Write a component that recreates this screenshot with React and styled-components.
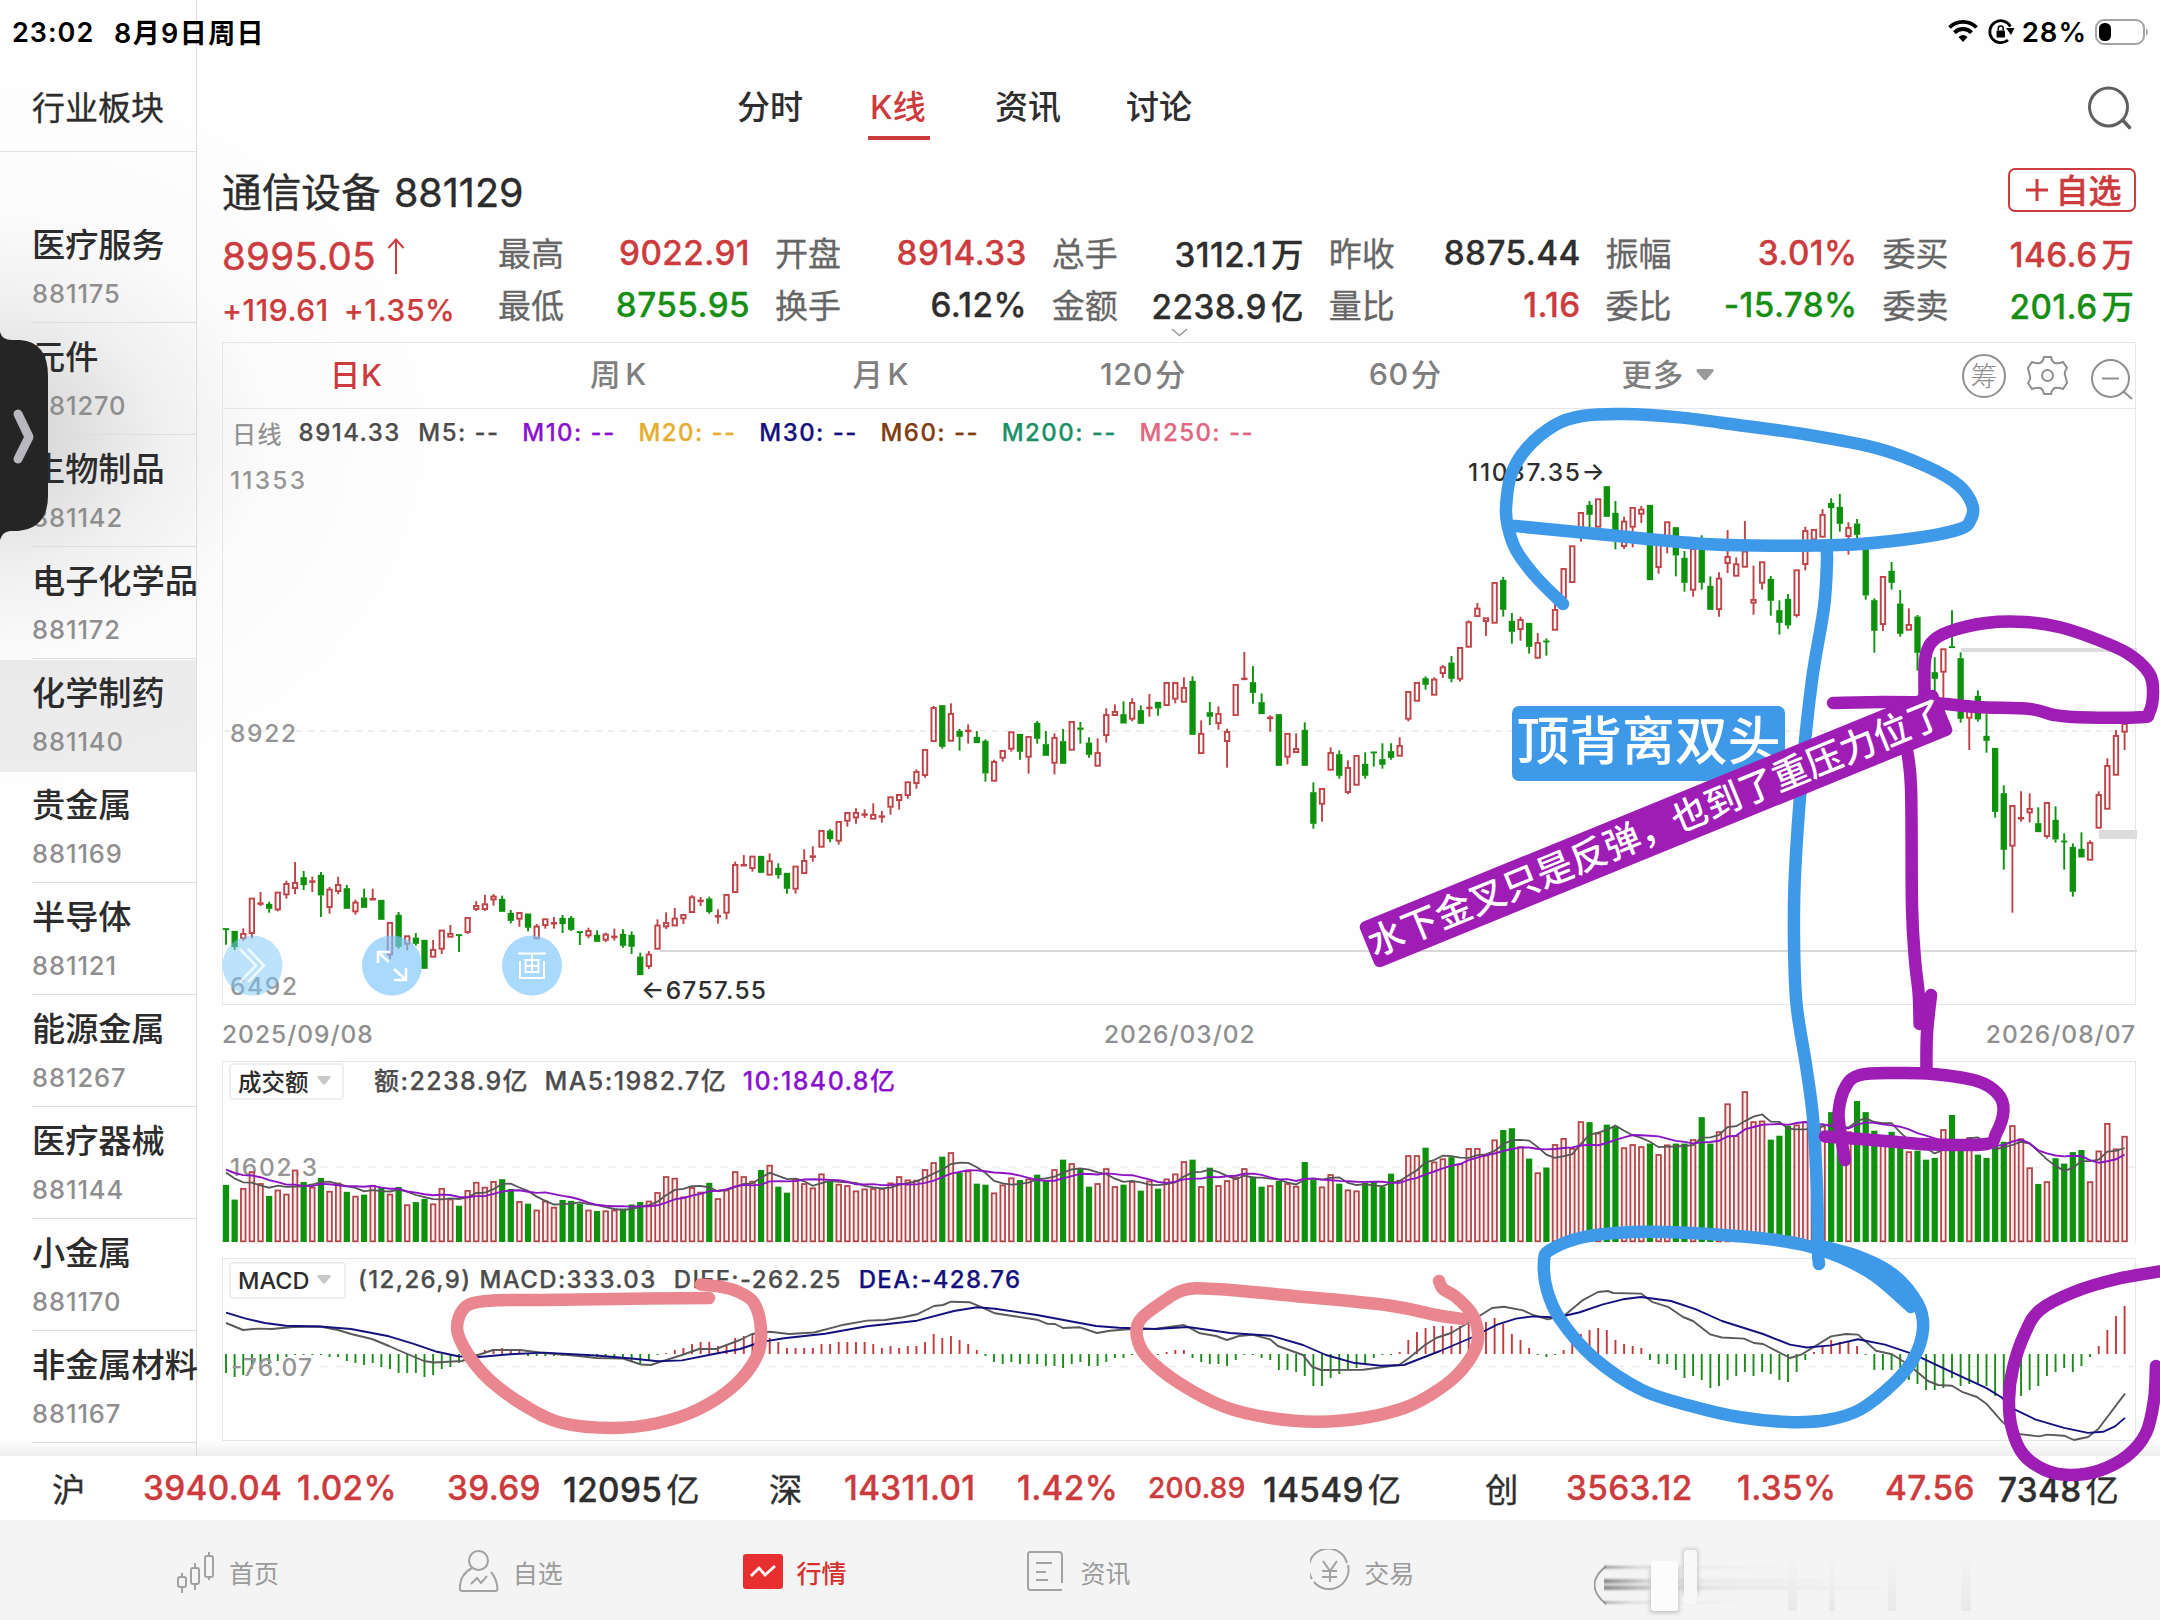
import React from 'react';
import styled, { createGlobalStyle } from 'styled-components';

const GlobalStyle = createGlobalStyle`
  * {
    box-sizing: border-box;
  }

  body {
    margin: 0;
    background: #fefefe;
    color: #2c2c2c;
    font-family: Inter, 'Noto Sans CJK SC', sans-serif;
  }
`;

const RED = '#cc3b3d';
const GREEN = '#178f15';
const DARK = '#2e2e2e';

/* ---------- chart data ---------- */

// every candle: up/down, high, body top, body bottom, low (thirds of a pixel below `top`)
const candleBlocks = [
  {
    top: 540,
    rows: `g 1165 1165 1168 1214,g 1173 1173 1221 1230,r 1165 1180 1196 1202,r 1074 1074 1181 1195,r 1056 1088 1092 1098,
    g 1085 1092 1106 1118,r 1056 1056 1110 1114,r 1022 1030 1065 1076,r 966 1027 1046 1063,g 993 1012 1035 1050,
    r 1010 1022 1025 1056,g 996 1005 1066 1131,r 1041 1047 1103 1121,r 1010 1033 1055 1063,g 1035 1045 1106 1106,
    r 1079 1086 1116 1124,g 1046 1073 1103 1106,r 1046 1075 1079 1082,g 1080 1080 1139 1142,r 1147 1147 1245 1258,
    g 1116 1125 1220 1226,r 1185 1187 1213 1231,g 1179 1193 1211 1217,g 1200 1200 1286 1286,r 1200 1228 1252 1253,
    r 1170 1170 1228 1242,r 1155 1180 1192 1193,g 1183 1183 1187 1236,r 1132 1132 1178 1182,r 1083 1096 1109 1113,
    r 1064 1091 1109 1113,r 1062 1068 1080 1097,g 1067 1077 1115 1116,g 1110 1119 1142 1150,r 1117 1117 1138 1160,
    g 1121 1121 1163 1174,r 1152 1158 1197 1200,r 1134 1136 1157 1166,r 1131 1147 1150 1166,g 1125 1134 1152 1179,
    g 1128 1134 1169 1173,g 1174 1174 1178 1215,r 1163 1171 1188 1195,g 1171 1185 1205 1206,r 1178 1182 1201 1206,
    r 1166 1188 1190 1202,g 1168 1182 1217 1223,g 1174 1185 1220 1242,g 1238 1250 1305 1308,r 1233 1242 1280 1287,
    r 1138 1155 1228 1230,r 1117 1147 1161 1167,r 1104 1134 1158 1160,r 1121 1123 1137 1152,r 1066 1070 1118 1121,
    r 1071 1080 1083 1098,g 1070 1076 1116 1121,r 1108 1126 1129 1151`,
  },
  {
    top: 600,
    rows: `r 883 883 940 958,r 785 793 878 880,r 765 793 797 797,r 768 768 806 815,g 768 768 818 818,
    r 760 782 826 828,g 790 804 825 836,g 819 819 866 881,r 795 798 868 881,r 748 781 821 822,
    r 739 767 770 785,r 691 691 742 743,g 687 692 717 727,r 664 664 724 734,r 637 637 664 680,
    r 625 637 654 671,r 628 641 644 654,r 610 643 658 660,r 633 647 650 668,r 590 590 622 644,
    r 583 583 602 629,r 545 545 587 596,r 508 514 551 566,r 448 448 527 533,r 318 322 425 428,
    g 316 316 440 446,r 310 340 424 425,g 387 393 410 452,r 373 390 393 431,g 393 411 429 431,
    g 418 423 520 545,r 479 484 544 545,r 451 451 475 485,r 395 395 448 455,g 399 402 455 479,
    r 409 409 472 521,g 363 369 416 431,g 393 433 467 470,r 400 412 490 523,g 387 424 491 491,
    r 364 364 451 452,g 366 383 389 431,g 412 428 464 473,r 415 457 499 500,r 325 343 407 428,
    r 313 334 347 350,g 304 343 370 372,r 295 307 358 364,g 316 331 371 372,r 282 321 324 350,
    g 306 306 325 347,r 244 247 317 320,r 247 247 298 310,r 232 262 307 308,g 229 243 404 404,
    r 361 400 461 462,g 306 337 350 375,r 319 340 371 389,r 386 394 425 503,r 253 253 347 348,
    r 156 234 238 240,g 198 247 278 311,g 280 307 342 344,r 346 351 354 395,g 343 343 497 497,
    r 400 400 472 493,r 400 445 458 461,g 367 390 497 497,g 547 577 671 686,r 565 565 613 665,
    r 442 457 511 514,g 451 463 527 536,r 481 502 578 583,r 466 466 556 557,g 457 492 527 536,
    g 455 455 458 500,g 430 478 494 506,g 430 454 473 479,r 412 436 469 470,r 274 274 358 364,
    r 247 247 304 305,g 229 235 254 269,r 232 237 286 287`,
  },
  {
    top: 440,
    rows: `r 675 680 701 714,g 648 668 716 727,r 622 622 718 725,r 541 545 622 623,r 489 504 530 532,
    r 532 533 545 588,r 427 427 550 551,g 411 420 509 530,g 519 543 575 611,r 530 538 569 602,
    g 549 549 620 641,r 579 607 655 656,g 595 602 604 647,r 490 508 571 573,r 385 385 475 500,
    r 317 317 428 429,r 217 217 265 305,g 183 195 224 265,r 176 176 262 263,g 139 139 230 230,
    g 183 219 270 328,r 230 243 320 327,r 202 202 262 322,r 198 207 223 249,g 192 195 420 423,
    r 300 310 383 401,r 245 245 305 340,g 262 262 346 409,g 333 354 428 455,r 320 325 451 470,
    g 286 325 428 449,g 409 438 509 512,r 397 414 509 530,r 270 349 371 399,r 352 371 409 410,
    r 243 333 382 383,r 377 478 490 524,r 365 365 430 449,g 408 417 482 527,g 481 511 548 584,
    g 462 477 556 566,r 389 389 527 532,r 260 271 374 391,r 265 268 300 310,r 207 223 292 293,
    g 175 189 204 310,g 162 201 251 275,r 247 262 290 344,g 237 251 284 305,g 320 328 466 479,
    g 475 481 572 638,r 409 409 554 573,g 366 393 428 449,g 450 491 581 590,r 505 553 571 573,
    g 525 530 638 692,g 640 660 700 700,g 652 697 716 757,r 626 626 697 790,g 511 619 623 624,
    g 637 655 836 848,r 781 785 835 930,g 751 768 838 845,g 820 888 902 938,g 921 924 1115 1133,
    g 1036 1060 1229 1289,r 1096 1096 1219 1418,r 1054 1132 1135 1145,r 1060 1105 1119 1147,g 1102 1150 1176 1178,
    r 1087 1087 1190 1196,g 1099 1140 1198 1208,g 1180 1202 1205 1289,g 1210 1221 1355 1370,g 1177 1227 1252 1253,
    r 1201 1207 1261 1262,r 1054 1063 1165 1168,r 955 976 1108 1109,r 870 886 1006 1007,r 846 850 877 930`,
  },
];

const candles = candleBlocks.flatMap(({ top, rows }) =>
  rows.split(',').map((row) => {
    const [dir, ...v] = row.trim().split(' ');
    const [high, open, close, low] = v.map((n) => top + Number(n) / 3);
    return { up: dir === 'r', high, open, close, low };
  })
);

const volumeBlocks = [
  {
    top: 840,
    scale: 2.45,
    values: [
      845, 881, 853, 812, 841, 872, 857, 867, 808, 838, 850, 828, 860, 840, 862, 872, 869, 846, 852, 867, 850, 893,
      887, 879, 891, 853, 879, 896, 858, 838, 850, 836, 831, 855, 885, 891, 906, 884, 899, 882, 884, 891, 906, 909,
      908, 906, 903, 893, 887, 884, 863, 824, 828, 874, 851, 862, 840, 878, 857, 812,
    ],
  },
  {
    top: 1030,
    scale: 3,
    values: [
      439, 453, 420, 405, 470, 488, 446, 460, 473, 431, 452, 462, 466, 482, 476, 475, 475, 458, 439, 449, 450, 418,
      397, 380, 367, 428, 422, 461, 464, 488, 464, 443, 450, 446, 434, 452, 418, 389, 400, 417, 470, 460, 415, 469,
      464, 454, 482, 452, 476, 446, 431, 394, 389, 469, 413, 466, 451, 440, 415, 440, 470, 466, 453, 460, 468, 396,
      450, 470, 433, 461, 479, 482, 458, 454, 470, 431, 450, 376, 376, 353, 395,
    ],
  },
  {
    top: 940,
    scale: 2.8,
    values: [
      612, 608, 626, 583, 583, 602, 559, 532, 527, 578, 612, 651, 637, 572, 555, 583, 508, 510, 540, 517, 523, 581,
      572, 578, 570, 600, 573, 570, 570, 558, 496, 570, 536, 458, 547, 424, 508, 506, 559, 548, 520, 517, 508, 545,
      520, 482, 545, 536, 451, 482, 534, 560, 537, 580, 592, 590, 615, 610, 530, 490, 590, 553, 601, 610, 575, 565,
      519, 556, 637, 683, 676, 611, 626, 594, 588, 676, 590, 513, 584, 549,
    ],
  },
];

const volumeTops = volumeBlocks.flatMap(({ top, scale, values }) => values.map((v) => top + v / scale));

const macdBars = [
  -19, -23, -21, -15, -10, -10, -7, -3, -1, -1, -1, -1, -3, -3, -7, -9, -11, -9, -13, -15, -19, -19, -19, -23, -21,
  -15, -13, -9, -5, -2, 4, 5, 6, 3, 3, -2, -2, -2, -2, -2, -2, -2, -2, -3, -3, -3, -5, -7, -11, -6, -1, 1, 4, 6, 10,
  12, 12, 8, 10, 16, 18, 20, 20, 16, 12, 6, 6, 6, 6, 10, 10, 12, 12, 12, 12, 10, 6, 8, 6, 8, 8, 12, 20, 16, 18, 14,
  10, 4, -2, -8, -10, -8, -10, -10, -10, -12, -12, -14, -10, -8, -12, -12, -8, -4, -4, -1, -1, 0, -1, 2, 4, 4, -4,
  -8, -10, -10, -12, -6, -1, -1, -4, -6, -16, -16, -18, -22, -32, -32, -24, -20, -16, -14, -10, -4, -1, -1, 2, 14,
  22, 26, 28, 28, 28, 28, 30, 30, 32, 36, 30, 20, 14, 6, -1, -3, -1, 4, 14, 20, 24, 26, 24, 14, 10, 8, 6, -6, -10,
  -10, -16, -24, -22, -26, -34, -32, -26, -22, -18, -22, -18, -20, -26, -28, -18, -6, 2, 8, 14, 12, 12, 8, -1, -16,
  -16, -16, -22, -26, -30, -36, -36, -34, -24, -32, -30, -30, -32, -42, -44, -44, -42, -36, -32, -22, -18, -14, -18,
  -12, -3, 8, 24, 38, 48,
];

const diffLine = `226,1323 243,1330 258,1328.6 272,1329 293,1327 320,1326.5 338,1330 351,1334 372,1339 389,1346 398,1350
424,1361 434,1362.5 462,1361 475,1356 493,1350 520,1350 544,1353 579,1356 596,1358 623,1358.5 641,1364.5 651,1365
661,1361.6 682,1355 699,1349 716,1349 740,1340 752,1334 770,1331.7 789,1334 814,1332.5 844,1324.7 867,1320.6 885,1320
903,1317.3 917,1314.3 934,1306 943,1305 951,1301.7 970,1302.3 982,1307.3 995,1313.3 1011,1315.7 1037,1319.7
1047,1323.7 1055,1324 1063,1328 1080,1327.3 1097,1333 1110,1330.7 1128,1329.3 1156,1328.7 1184,1325 1200,1333.3
1216,1336 1227,1340 1239,1336 1252,1334.7 1270,1339.3 1278,1346 1303,1355 1312,1366.7 1321,1370 1363,1369.7
1399,1365 1409,1358 1425,1345 1436,1338 1451,1333 1473,1320 1492,1308 1504,1306.8 1523,1310.4 1533,1315 1548,1319.3
1565,1315 1582,1300.7 1598,1292 1608,1291 1613,1293 1641,1293.6 1652,1301.8 1668,1306.8 1683,1317 1693,1321
1710,1334.3 1722,1337.5 1744,1338.6 1754,1343 1763,1344 1790,1358 1802,1354.3 1831,1336.4 1846,1334 1858,1334.6
1876,1350.7 1892,1354.3 1909,1365 1928,1381 1938,1385 1952,1385.7 1962,1391.8 1977,1397 1987,1404.3 2001,1420.4
2015,1433.6 2039,1436.4 2047,1434.6 2064,1435.7 2074,1440 2088,1437 2098,1429.3 2125,1393.6`;

const deaLine = `226,1312.7 245,1318.4 265,1323 286,1325.7 320,1326.5 351,1329 389,1336.3 413,1343.7 437,1351.8
458,1356.3 479,1357 510,1354.3 544,1352.6 596,1355.5 634,1358.8 658,1361.2 682,1360.4 710,1354.7 740,1349 761,1342
784,1338.3 825,1333.7 867,1326.3 917,1320.7 954,1311 977,1307.3 995,1308.7 1037,1315 1069,1321 1096,1326
1119,1327.7 1156,1329 1188,1327 1230,1333 1271,1335.7 1303,1345 1326,1355 1353,1362.7 1381,1365.7 1404,1365
1440,1351 1473,1337 1497,1324.6 1516,1318.6 1533,1316.4 1557,1317.5 1579,1312.5 1603,1304.3 1623,1299.3 1641,1297
1671,1301 1696,1309.3 1722,1321 1763,1334 1790,1344.6 1807,1347.5 1831,1345.4 1858,1339.3 1885,1344.6 1914,1354.3
1948,1370.4 1986,1387.9 2001,1397 2015,1409.6 2035,1419.3 2064,1427.9 2088,1432.9 2103,1431.8 2115,1426.4
2125,1417.9`;

const VOLUME_BASE = 1242;
const MACD_ZERO = 1354;
const barX = (i) => 226 + 8.63 * i;

// moving average over the bar tops, seeded with the sessions before the first bar
const movingAverage = (size) => {
  const history = [1166.9, 1166.9, 1166.9, 1166.9, 1166.9, 1169.4, 1169.4, 1169.4, 1169.4];
  const all = [...history, ...volumeTops];
  return volumeTops
    .map((_, i) => {
      const end = i + history.length + 1;
      const sum = all.slice(end - size, end).reduce((a, b) => a + b, 0);
      return `${barX(i).toFixed(1)},${(sum / size).toFixed(1)}`;
    })
    .join(' ');
};

/* ---------- hand drawn marks ---------- */

const strokes = [
  {
    color: '#ea868f',
    points: `709,1298 648,1298.4 544,1300 493,1300.4 469,1304.5 459,1317 458,1334 472,1360 493,1383 527,1407 562,1423
    613,1428 658,1423 699,1409 735,1385 757,1356 761,1330 754,1303 738,1291.7 720,1286.7 701,1284.5`,
  },
  {
    color: '#ea868f',
    points: `1463,1319 1436,1315 1386,1305 1294,1296 1216,1289 1184,1290 1161,1303 1140,1320 1137,1337 1147,1357
    1179,1383 1225,1407 1271,1418 1317,1421.7 1363,1418 1404,1408 1432,1394 1458,1374 1475,1350 1478,1333 1472,1314
    1456,1297 1443,1289 1439,1281`,
  },
  {
    color: '#3e99e9',
    points: `1563,604 1536,577 1516,550 1508,527 1506,508 1511,475 1527,448 1555,425 1582,416 1624,414 1679,417.4
    1738,425 1807,434.6 1876,448 1927,466.6 1959,485.5 1972.6,506 1970,521 1960,529 1923,537 1860,544 1788,545.7
    1710,544.3 1608,535 1515,526`,
  },
  {
    color: '#3e99e9',
    points: `1826,547 1827,560 1824,607 1812,680 1802,773 1795,873 1794,940 1796.5,1004 1806,1065 1813,1118 1817,1190
    1818,1250 1819,1264`,
  },
  {
    color: '#3e99e9',
    points: `1911,1307 1875,1276 1840,1257 1804,1245 1759,1238 1691,1233 1633,1232 1584,1237 1550,1250 1544,1262
    1547,1290 1560,1319 1594,1358 1642,1390 1691,1406 1739,1417 1788,1422 1827,1420 1860,1409.6 1894,1383 1914,1358
    1923,1329 1918,1304 1894,1275 1860,1257 1820,1246`,
  },
  {
    color: '#9e1db5',
    points: `1833,703 1885,702 1933,703 1977,707 2030,709 2054,715 2079,717.3 2140,717.3 2149,713 2153,693 2149,673
    2127,653 2093,638 2059,627 2025,622 1986,623 1948,632 1931,643 1925,660 1924.5,693 1924,712`,
  },
  { color: '#9e1db5', points: '1906,745 1911,787 1912,907 1915,960 1918.7,994 1919.6,1024' },
  { color: '#9e1db5', points: '1931,995 1927,1033 1926.4,1070' },
  {
    color: '#9e1db5',
    points: `1845,1160 1841,1136 1838.7,1111 1846,1086 1860,1075 1894,1073 1933,1074 1977,1081 1998,1094 2003.5,1111
    1996,1134 1986,1144 1933,1144.6 1885,1141 1825,1136.4`,
  },
  {
    color: '#9e1db5',
    points: `2168,1270 2117,1279 2074,1292 2040,1310 2025,1333 2013,1368 2009,1400 2012,1429 2023,1454 2045,1470
    2069,1475 2098,1471 2127,1456 2146,1433 2154,1400 2156,1366`,
  },
];

// Catmull-Rom through the recorded points
const smooth = (text) => {
  const p = text.trim().split(/\s+/).map((s) => s.split(',').map(Number));
  let d = `M${p[0]}`;
  for (let i = 0; i < p.length - 1; i += 1) {
    const a = p[i - 1] || p[i];
    const b = p[i];
    const c = p[i + 1];
    const e = p[i + 2] || c;
    d += `C${b[0] + (c[0] - a[0]) / 6},${b[1] + (c[1] - a[1]) / 6} ${c[0] - (e[0] - b[0]) / 6},${
      c[1] - (e[1] - b[1]) / 6
    } ${c[0]},${c[1]}`;
  }
  return d;
};

/* ---------- page frame ---------- */

const Screen = styled.div`
  position: relative;
  display: flex;
  flex-direction: column;
  width: 2160px;
  height: 1620px;
  overflow: hidden;
`;

const Body = styled.div`
  display: flex;
  height: 1456px;
  background: radial-gradient(
      ellipse 450px 370px at 0 436px,
      rgba(0, 0, 0, 0.18),
      rgba(0, 0, 0, 0.055) 36%,
      rgba(0, 0, 0, 0.013) 60%,
      transparent
    ),
    linear-gradient(#fefefe 1440px, #eeeeee);
`;

const StatusBar = styled.div`
  position: absolute;
  inset: 0 0 auto 0;
  display: flex;
  align-items: center;
  height: 64px;
  padding: 0 10px 0 12px;
  color: #000;
  font-size: 27px;
  font-weight: 600;
`;

const Clock = styled.span`
  width: 102px;
  letter-spacing: 1px;
`;

const Today = styled.span`
  flex: 1;
  padding-bottom: 2px;
  font-size: 27px;
  letter-spacing: 1.4px;
`;

const Charge = styled.span`
  margin: 0 7px 0 6px;
  font-size: 27.5px;
  letter-spacing: 1px;
`;

/* ---------- sidebar ---------- */

const Sidebar = styled.aside`
  flex: none;
  width: 197px;
  border-right: 1px solid #dcdcdc;
  white-space: nowrap;
`;

const SidebarTitle = styled.div`
  height: 152px;
  margin-bottom: 60px;
  padding: 84px 0 0 32px;
  border-bottom: 1px solid #e2e2e2;
  font-size: 33px;
  line-height: 48px;
  -webkit-text-stroke: 0.3px;
`;

const Sector = styled.div`
  height: 112px;
  padding-left: 32px;
  background: ${({ $active }) => ($active ? 'rgba(0, 0, 0, 0.065)' : 'none')};

  &::after {
    content: '';
    display: block;
    height: 1px;
    margin-top: 12px;
    background: ${({ $active }) => ($active ? 'transparent' : '#dedede')};
  }
`;

const SectorName = styled.div`
  padding-top: 9px;
  font-size: 33.2px;
  font-weight: 500;
  line-height: 48px;
`;

const SectorCode = styled.div`
  padding-top: 9px;
  color: #8e8e8e;
  font-size: 25.5px;
  font-weight: 500;
  letter-spacing: 0.9px;
  line-height: 32px;
  margin-bottom: 1px;
`;

const Drawer = styled.svg`
  position: absolute;
  left: 0;
  top: 330px;
`;

/* ---------- quote header ---------- */

const Main = styled.main`
  width: 1963px;
  padding: 64px 24px 0 25px;
`;

const TopTabs = styled.nav`
  display: flex;
  gap: 65px;
  height: 104px;
  padding: 19px 0 0 515px;
`;

const TopTab = styled.div`
  height: 57px;
  padding-left: ${({ $active }) => ($active ? 2 : 0)}px;
  width: ${({ $active }) => ($active ? 62 : 66)}px;
  border-bottom: ${({ $active }) => ($active ? `4px solid ${RED}` : 'none')};
  color: ${({ $active }) => ($active ? RED : DARK)};
  font-size: 33px;
  font-weight: 500;
  line-height: 48px;
  white-space: nowrap;
`;

const SearchIcon = styled.svg`
  margin-left: auto;
`;

const TitleRow = styled.div`
  display: flex;
  justify-content: space-between;
  align-items: center;
  height: 44px;
  font-size: 39.7px;

  span {
    padding-bottom: 2px;
    -webkit-text-stroke: 0.4px;
  }

  b {
    margin-left: 2px;
    font-weight: 400;
    font-size: 39.5px;
  }
`;

const WatchButton = styled.button`
  display: flex;
  align-items: center;
  justify-content: center;
  gap: 8px;
  width: 128px;
  height: 44px;
  padding: 0 0 2px 3px;
  border: 2px solid ${RED};
  border-radius: 7px;
  background: #fff;
  color: ${RED};
  font: 500 33px 'Noto Sans CJK SC', sans-serif;
  -webkit-text-stroke: 0.4px ${RED};

  svg {
    margin-top: 2px;
  }
`;

const QuoteRow = styled.div`
  position: relative;
  display: flex;
  height: 130px;
`;

const PriceBlock = styled.div`
  width: 276px;
  padding-top: 20px;
  color: ${RED};
`;

const Price = styled.div`
  display: flex;
  align-items: center;
  gap: 11px;
  height: 48px;
  font-size: 38.5px;
  letter-spacing: 0.3px;
  -webkit-text-stroke: 0.5px ${RED};
`;

const Change = styled.div`
  display: flex;
  gap: 15px;
  height: 60px;
  font-size: 30px;
  font-weight: 500;
  letter-spacing: 0.6px;
  line-height: 60px;
  -webkit-text-stroke: 0.2px ${RED};
`;

const Stats = styled.div`
  display: grid;
  grid-template-columns: repeat(6, 252px);
  grid-auto-rows: 52px;
  column-gap: 24.9px;
  padding-top: 14px;
`;

const Stat = styled.div`
  display: flex;
  justify-content: space-between;
  align-items: center;
  color: #666;
  font-size: 33px;
  white-space: nowrap;
  -webkit-text-stroke: 0.3px;

  span {
    padding-top: ${({ $unit }) => ($unit ? 0 : 2)}px;
    color: ${({ $color }) => $color || DARK};
    font-weight: 500;
    font-size: 33.3px;
    letter-spacing: 0.4px;
  }

  i {
    margin-left: 4px;
    font-style: normal;
    font-size: 32.5px;
  }
`;

const MoreArrow = styled.svg`
  position: absolute;
  left: 949px;
  top: 116px;
`;

/* ---------- chart panels ---------- */

const Panel = styled.div`
  border: 1px solid #e4e7e9;
  border-width: ${({ $open }) => ($open ? '1px 1px 0' : '1px')};
  height: ${({ $height }) => $height}px;
`;

const Periods = styled.div`
  display: flex;
  align-items: center;
  height: 66px;
  padding-left: 2px;
  border-bottom: 1px solid #e4e7e9;
`;

const Period = styled.div`
  display: flex;
  align-items: center;
  justify-content: center;
  gap: ${({ $gap }) => $gap || 0}px;
  width: 262.3px;
  padding-bottom: 5px;
  color: ${({ $active }) => ($active ? RED : '#7f7f7f')};
  font-size: 30.5px;
  font-weight: 500;
  letter-spacing: 0.6px;

  svg {
    margin-top: 4px;
  }
`;

const Tools = styled.svg`
  margin-left: auto;
  margin-right: -2px;
`;

const Legend = styled.div`
  display: flex;
  align-items: center;
  gap: ${({ $gap }) => $gap || 22.7}px;
  height: ${({ $height }) => $height}px;
  padding-left: ${({ $left }) => $left}px;
  padding-bottom: ${({ $lift }) => $lift || 0}px;
  color: #4c4c4c;
  font-size: ${({ $size }) => $size || 24}px;
  font-weight: 500;
  letter-spacing: ${({ $tracking }) => $tracking || 1.45}px;
  white-space: nowrap;
  -webkit-text-stroke: 0.25px;
`;

const LegendItem = styled.span`
  color: ${({ $color }) => $color};
  font-weight: ${({ $weight }) => $weight || 500};
  margin-left: ${({ $shift }) => $shift || 0}px;
`;

const Dates = styled.div`
  display: flex;
  justify-content: space-between;
  align-items: center;
  height: 56px;
  padding-top: 1px;
  color: #8f8f8f;
  font-size: 24.5px;
  font-weight: 500;
  letter-spacing: 1px;
`;

const PanelHead = styled.div`
  display: flex;
  align-items: center;
  height: ${({ $height }) => $height}px;
  padding: ${({ $height }) => $height - 38}px 0 0 6px;
`;

const IndicatorSelect = styled.div`
  display: flex;
  align-items: center;
  gap: 8px;
  width: ${({ $width }) => $width}px;
  height: 37px;
  padding-left: 7px;
  border: 2px solid #efefef;
  border-radius: 4px;
  background: #fff;
  font-size: 23.5px;
  font-weight: 500;
  white-space: nowrap;
`;

const Plot = styled.svg`
  display: block;
  overflow: visible;
  margin-left: -1px;
`;

const AxisLabel = styled.text`
  fill: ${({ $dark }) => ($dark ? DARK : '#959595')};
  font-size: 24.5px;
  font-weight: 500;
`;

const Spacer = styled.div`
  height: 15px;
`;

/* ---------- bottom bars ---------- */

const IndexBar = styled.div`
  display: flex;
  align-items: center;
  height: 64px;
  padding: 0 0 2px 52px;
  background: #fff;
  white-space: nowrap;
`;

const IndexCell = styled.span`
  width: ${({ $width }) => $width}px;
  flex: none;
  padding-top: ${({ $up }) => ($up ? 2 : 0)}px;
  color: ${({ $up }) => ($up ? RED : DARK)};
  font-size: ${({ $small }) => ($small ? 28 : 33.3)}px;
  font-weight: ${({ $market }) => ($market ? 400 : 500)};
  letter-spacing: 0.35px;
  -webkit-text-stroke: 0.35px;

  i {
    margin-left: 4px;
    font-style: normal;
    font-weight: 400;
  }
`;

const NavBar = styled.nav`
  display: flex;
  height: 100px;
  padding: 25px 0 0 175px;
  background: #f4f4f4;
`;

const NavItem = styled.div`
  display: flex;
  align-items: center;
  gap: 12px;
  width: 283.8px;
  height: 54px;
  color: ${({ $active }) => ($active ? '#d3302f' : '#9b9b9b')};
  font-size: 25px;
  font-weight: ${({ $active }) => ($active ? 500 : 400)};
`;

/* ---------- marks over the page ---------- */

const Overlay = styled.svg`
  position: absolute;
  left: 0;
  top: 0;
`;

const BlueNote = styled.div`
  position: absolute;
  left: 1512px;
  top: 706px;
  width: 273px;
  height: 75px;
  border-radius: 7px;
  background: #3e99e9;
  color: #fff;
  font-size: 52.8px;
  font-weight: 500;
  line-height: 70px;
  text-align: center;
  white-space: nowrap;
`;

const PurpleNote = styled.div`
  position: absolute;
  left: 1344px;
  top: 804px;
  width: 624px;
  height: 49px;
  border-radius: 6px;
  background: #9e1db5;
  color: #fff;
  font-size: 36.4px;
  font-weight: 500;
  line-height: 48px;
  text-align: center;
  white-space: nowrap;
  transform: rotate(-22.2deg);
`;

/* ---------- pieces ---------- */

const sectors = [
  ['医疗服务', '881175'],
  ['元件', '881270'],
  ['生物制品', '881142'],
  ['电子化学品', '881172'],
  ['化学制药', '881140'],
  ['贵金属', '881169'],
  ['半导体', '881121'],
  ['能源金属', '881267'],
  ['医疗器械', '881144'],
  ['小金属', '881170'],
  ['非金属材料', '881167'],
];

// label, value, unit, color
const stats = [
  ['最高', '9022.91', '', RED],
  ['开盘', '8914.33', '', RED],
  ['总手', '3112.1', '万'],
  ['昨收', '8875.44', ''],
  ['振幅', '3.01%', '', RED],
  ['委买', '146.6', '万', RED],
  ['最低', '8755.95', '', GREEN],
  ['换手', '6.12%', ''],
  ['金额', '2238.9', '亿'],
  ['量比', '1.16', '', RED],
  ['委比', '-15.78%', '', GREEN],
  ['委卖', '201.6', '万', GREEN],
];

const averages = [
  ['M5: --', '#4c4c4c'],
  ['M10: --', '#8a12cf'],
  ['M20: --', '#e6ad2e'],
  ['M30: --', '#14107e'],
  ['M60: --', '#803c10'],
  ['M200: --', '#1b8f66'],
  ['M250: --', '#e2667f'],
];

const indices = [
  { text: '沪', width: 91, market: true },
  { text: '3940.04', width: 154, up: true },
  { text: '1.02%', width: 150, up: true },
  { text: '39.69', width: 116, up: true },
  { text: '12095', unit: '亿', width: 206 },
  { text: '深', width: 75, market: true },
  { text: '14311.01', width: 173, up: true },
  { text: '1.42%', width: 131, up: true },
  { text: '200.89', width: 115, up: true, small: true },
  { text: '14549', unit: '亿', width: 222 },
  { text: '创', width: 81, market: true },
  { text: '3563.12', width: 171, up: true },
  { text: '1.35%', width: 148, up: true },
  { text: '47.56', width: 113, up: true },
  { text: '7348', unit: '亿', width: 130 },
];

const Caret = ({ color = '#c9c9c9', size = 14 }) => (
  <svg width={size} height={size * 0.65} viewBox='0 0 20 13'>
    <path d='M1.500 0h17q2 1 .500 3L12 11.500q-2 2-4 0L1 3q-1.500-2 .500-3z' fill={color} />
  </svg>
);

const Candle = ({ candle, x }) => {
  const { up, high, open, close, low } = candle;
  const color = up ? '#bf4247' : '#0e920e';
  const h = Math.max(close - open, 1.6);
  return (
    <g stroke={color} strokeWidth='1.9'>
      {open - high > 1 && <path d={`M${x} ${high}V${open}`} />}
      {low - close > 1 && <path d={`M${x} ${close}V${low}`} />}
      {up ? (
        <rect x={x - 2.2} y={open + 0.6} width='4.4' height={Math.max(h - 1.2, 0.6)} fill='none' />
      ) : (
        <rect x={x - 2.5} y={open + 0.5} width='5' height={Math.max(h - 1, 0.6)} fill={color} strokeWidth='1.3' />
      )}
    </g>
  );
};

const PriceChart = () => (
  <Plot width='1913' height='547' viewBox='222 457 1913 547'>
    <path d='M224 731H2134' stroke='#ededed' strokeWidth='2' strokeDasharray='6 6' />
    <path d='M660 951H2137' stroke='#dadada' strokeWidth='2' />
    <path d='M1961 650H2137' stroke='#dcdcdc' strokeWidth='4' />
    <path d='M2099 834.500H2137' stroke='#dcdcdc' strokeWidth='9' />
    {candles.map((candle, i) => (
      <Candle key={i} candle={candle} x={barX(i)} />
    ))}
    <AxisLabel x='230' y='489' textLength='75'>11353</AxisLabel>
    <AxisLabel x='230' y='742' textLength='66'>8922</AxisLabel>
    <AxisLabel x='230' y='995' textLength='67'>6492</AxisLabel>
    <AxisLabel $dark x='1468' y='481' textLength='137'>11037.35→</AxisLabel>
    <AxisLabel $dark x='641' y='999' textLength='125'>←6757.55</AxisLabel>
    <g fill='#7cc6fa' fillOpacity='0.66'>
      <circle cx='252.500' cy='965.500' r='30' fillOpacity='0.5' />
      <circle cx='392' cy='965.500' r='30' />
      <circle cx='532' cy='965.500' r='30' />
    </g>
    <g fill='none' stroke='#fff' strokeWidth='2.600'>
      <path strokeOpacity='0.75' d='M240 949L256 965.500L240 982M248 949L264 965.500L248 982' />
      <path d='M378 963V952H390M378 952L389 962M406 968V980H394M406 980L394 969' />
      <path d='M518 953.500H546M520 961V978H544V961M525.500 960H538.500V972H525.500ZM532 955V972M525.500 966H538.500' strokeWidth='2' />
    </g>
  </Plot>
);

const VolumeChart = () => (
  <Plot width='1913' height='142' viewBox='222 1100 1913 142'>
    <path d='M320 1167H2134' stroke='#ededed' strokeWidth='1.500' strokeDasharray='8 8' />
    <AxisLabel x='230' y='1176' textLength='87'>1602.3</AxisLabel>
    {volumeTops.map((top, i) =>
      candles[i].up ? (
        <rect
          key={i}
          x={barX(i) - 2.3}
          y={top + 0.7}
          width='4.600'
          height={VOLUME_BASE - top - 1.4}
          fill='#f8e4e4'
          fillOpacity='0.7'
          stroke='#b4464a'
          strokeWidth='1.800'
        />
      ) : (
        <rect key={i} x={barX(i) - 3.1} y={top} width='6.200' height={VOLUME_BASE - top} fill='#0e920e' />
      )
    )}
    <polyline points={movingAverage(5)} fill='none' stroke='#565656' strokeWidth='1.800' />
    <polyline points={movingAverage(10)} fill='none' stroke='#8d14c4' strokeWidth='1.900' />
  </Plot>
);

const MacdChart = () => (
  <Plot width='1913' height='140' viewBox='222 1299 1913 140'>
    <path d='M320 1366.500H2134' stroke='#ededed' strokeWidth='1.500' strokeDasharray='8 8' />
    {macdBars.map((v, i) => (
      <path
        key={i}
        d={`M${barX(i)} ${MACD_ZERO}v${-v || 1}`}
        stroke={v > 0 ? '#c03a3f' : '#1a8b1a'}
        strokeWidth='1.900'
      />
    ))}
    <AxisLabel x='231' y='1376' textLength='81'>-76.07</AxisLabel>
    <polyline points={diffLine} fill='none' stroke='#5a5a5a' strokeWidth='1.900' strokeLinejoin='round' />
    <polyline points={deaLine} fill='none' stroke='#14107e' strokeWidth='1.900' strokeLinejoin='round' />
  </Plot>
);

const StatusIcons = () => (
  <svg width='68' height='30' viewBox='0 0 68 30'>
    <g fill='none' stroke='#000' strokeWidth='3.900'>
      <path d='M1.500 10.500a19 19 0 0 1 27 0' />
      <path d='M6.500 15.600a12 12 0 0 1 17 0' />
    </g>
    <path d='M10.500 20q4.500-4 9 0L15 25z' />
    <path d='M60 23A11 11 0 1 1 62.500 9.500' fill='none' stroke='#000' strokeWidth='2.800' />
    <path d='M58 11h8.500l-3.500 7z' />
    <rect x='48.500' y='13.500' width='8.500' height='7' rx='1' />
    <path d='M50.200 13.500v-2a2.500 2.500 0 0 1 5 0v2' fill='none' stroke='#000' strokeWidth='1.500' />
  </svg>
);

const Battery = () => (
  <svg width='56' height='28' viewBox='0 0 56 28'>
    <rect x='2' y='2' width='48' height='24' rx='8' fill='none' stroke='#a3a3a3' strokeWidth='2' />
    <rect x='5' y='5' width='12' height='18' rx='5.500' />
    <path d='M52 10q4 4 0 8z' fill='#a3a3a3' />
  </svg>
);

const ToolIcons = () => (
  <Tools width='176' height='60' viewBox='1961 346 176 60'>
    <g fill='none' stroke='#8f8f8f' strokeWidth='2'>
      <circle cx='1984' cy='376' r='21' />
      <path d='M2044 357h7q1 5 4 6t8-1l4 6q-3 4-2 7t2 8l-4 6q-5-2-8-1t-4 6h-7q-1-5-4-6t-8 1l-4-6q3-4 2-7t-2-8l4-6q5 2 8 1t4-6z' />
      <circle cx='2047.500' cy='375.500' r='5.500' />
      <circle cx='2110.500' cy='378.500' r='18.500' />
      <path d='M2102 378.500h17M2123 391l9 8' />
    </g>
    <text x='1984' y='385.500' textAnchor='middle' fontSize='27' fill='#8f8f8f' fontWeight='300'>
      筹
    </text>
  </Tools>
);

const navIcons = {
  home: (
    <g fill='none' stroke='#a2a2a2' strokeWidth='2'>
      <rect x='3' y='28' width='8' height='10' rx='2' />
      <rect x='16' y='19' width='8' height='16' rx='2' />
      <rect x='30' y='7' width='8' height='21' rx='2' />
      <path d='M7 24v4M7 38v6M20 14v5M20 35v6M34 3v4M34 28v3' />
    </g>
  ),
  watch: (
    <g fill='none' stroke='#a2a2a2' strokeWidth='2'>
      <ellipse cx='19.500' cy='11.500' rx='9.500' ry='9.500' />
      <path d='M13 19Q1 25 .800 39Q.800 42 3 42H36Q38.500 42 38.500 40Q38 30 32 23' />
      <path d='M12 35l6-6 4 5 6-7' />
    </g>
  ),
  market: (
    <g>
      <rect x='0' y='5' width='40' height='35' rx='3' fill='#e62f2e' />
      <path d='M8 27l8-8 6 7 10-9' fill='none' stroke='#fff' strokeWidth='2.800' />
    </g>
  ),
  news: (
    <g fill='none' stroke='#a2a2a2' strokeWidth='2'>
      <path d='M36 34V7Q36 3 33 3H4Q2 3 2 6V38Q2 41 4 41H36' />
      <path d='M10 14h16M10 23h10M10 31h12' />
    </g>
  ),
  trade: (
    <g fill='none' stroke='#a2a2a2' strokeWidth='2'>
      <path d='M37 14A19.500 19.500 0 1 0 2 30M4 33A19.500 19.500 0 0 0 38 16' />
      <path d='M13 12l7 10 7-10M12 22h15M12 28h15M20 22v11' />
    </g>
  ),
};

const navItems = [
  ['home', '首页'],
  ['watch', '自选'],
  ['market', '行情'],
  ['news', '资讯'],
  ['trade', '交易'],
];

// the last entry of the bar, wiped out to the right
const Smudge = () => (
  <svg width='560' height='76' viewBox='1594 1530 560 76'>
    <defs>
      <linearGradient id='streak'>
        <stop offset='0' stopColor='#8a8a8a' />
        <stop offset='0.160' stopColor='#d2d2d2' />
        <stop offset='0.400' stopColor='#e9e9e9' />
        <stop offset='1' stopColor='#f4f4f4' />
      </linearGradient>
      <linearGradient id='ghost' x1='0' y1='0' x2='0' y2='1'>
        <stop offset='0' stopColor='#f4f4f4' />
        <stop offset='1' stopColor='#e9e9e9' />
      </linearGradient>
      <filter id='soft' x='-50%' y='-50%' width='200%' height='200%'>
        <feGaussianBlur stdDeviation='2.200' />
      </filter>
      <filter id='faint' x='-5%' y='-60%' width='110%' height='220%'>
        <feGaussianBlur stdDeviation='0 1' />
      </filter>
    </defs>
    <path d='M1606 1551Q1583 1570 1606 1589' fill='none' stroke='#9a9a9a' strokeWidth='1.800' />
    <g fill='url(#streak)' filter='url(#faint)'>
      <rect x='1604' y='1551' width='200' height='2.500' />
      <rect x='1604' y='1564' width='260' height='4.500' />
      <rect x='1604' y='1570.500' width='320' height='4.500' />
      <rect x='1604' y='1586.500' width='170' height='2' />
    </g>
    <g fill='url(#ghost)'>
      <rect x='1788' y='1540' width='9' height='56' />
      <rect x='1829' y='1540' width='6' height='56' />
      <rect x='1888' y='1540' width='8' height='56' />
      <rect x='1961' y='1540' width='10' height='56' />
    </g>
    <g fill='#c4c4c4' filter='url(#soft)'>
      <rect x='1650' y='1552' width='29' height='46' />
      <rect x='1683' y='1534' width='15' height='46' />
    </g>
    <rect x='1651' y='1546' width='27' height='50' rx='3' fill='#fcfcfc' />
    <rect x='1684' y='1535' width='13' height='54' rx='3' fill='#f8f8f8' />
  </svg>
);

const App = () => (
  <Screen>
    <GlobalStyle />
    <Body>
      <Sidebar>
        <SidebarTitle>行业板块</SidebarTitle>
        {sectors.map(([name, code]) => (
          <Sector key={code} $active={code === '881140'}>
            <SectorName>{name}</SectorName>
            <SectorCode>{code}</SectorCode>
          </Sector>
        ))}
      </Sidebar>

      <Main>
        <TopTabs>
          <TopTab>分时</TopTab>
          <TopTab $active>K线</TopTab>
          <TopTab>资讯</TopTab>
          <TopTab>讨论</TopTab>
          <SearchIcon width='50' height='50' viewBox='0 0 50 50'>
            <circle cx='22.500' cy='24' r='19' fill='none' stroke='#606060' strokeWidth='3' />
            <path d='M36.500 37l7 7.500' stroke='#606060' strokeWidth='3.500' strokeLinecap='round' />
          </SearchIcon>
        </TopTabs>

        <TitleRow>
          <span>
            通信设备 <b>881129</b>
          </span>
          <WatchButton>
            <svg width='22' height='22' viewBox='0 0 22 22'>
              <path d='M11 0v22M0 11h22' stroke={RED} strokeWidth='3' />
            </svg>
            自选
          </WatchButton>
        </TitleRow>

        <QuoteRow>
          <PriceBlock>
            <Price>
              8995.05
              <svg width='18' height='36' viewBox='0 0 18 36'>
                <path d='M9 36V2M1.500 10L9 1.500L16.500 10' fill='none' stroke={RED} strokeWidth='2' />
              </svg>
            </Price>
            <Change>
              <span>+119.61</span>
              <span>+1.35%</span>
            </Change>
          </PriceBlock>
          <Stats>
            {stats.map(([label, value, unit, color]) => (
              <Stat key={label} $color={color} $unit={unit}>
                {label}
                <span>
                  {value}
                  {unit && <i>{unit}</i>}
                </span>
              </Stat>
            ))}
          </Stats>
          <MoreArrow width='17' height='9' viewBox='0 0 17 9'>
            <path d='M1 1l7.500 6.500L16 1' fill='none' stroke='#999' strokeWidth='1.600' />
          </MoreArrow>
        </QuoteRow>

        <Panel $height={663}>
          <Periods>
            <Period $active>日K</Period>
            <Period $gap={4}>
              <span>周</span>
              <span>K</span>
            </Period>
            <Period $gap={4}>
              <span>月</span>
              <span>K</span>
            </Period>
            <Period $gap={2}>
              <span>120</span>
              <span>分</span>
            </Period>
            <Period $gap={2}>
              <span>60</span>
              <span>分</span>
            </Period>
            <Period $gap={12}>
              更多
              <Caret color='#9a9a9a' size={18} />
            </Period>
            <ToolIcons />
          </Periods>
          <Legend $height={48} $left={9} $lift={2}>
            <LegendItem $color='#8f8f8f' $weight={400}>日线</LegendItem>
            <LegendItem $shift={-7}>8914.33</LegendItem>
            {averages.map(([label, color], i) => (
              <LegendItem key={label} $color={color} $shift={i === 0 ? -5 : 0}>
                {label}
              </LegendItem>
            ))}
          </Legend>
          <PriceChart />
        </Panel>

        <Dates>
          <span>2025/09/08</span>
          <span>2026/03/02</span>
          <span>2026/08/07</span>
        </Dates>

        <Panel $open $height={182}>
          <PanelHead $height={38}>
            <IndicatorSelect $width={115}>
              成交额
              <Caret />
            </IndicatorSelect>
            <Legend $height={38} $left={30} $gap={15.5} $lift={4} $size={25} $tracking={1.4}>
              <LegendItem>额:2238.9亿</LegendItem>
              <LegendItem>MA5:1982.7亿</LegendItem>
              <LegendItem $color='#8a12cf'>10:1840.8亿</LegendItem>
            </Legend>
          </PanelHead>
          <VolumeChart />
        </Panel>
        <Spacer />
        <Panel $height={183}>
          <PanelHead $height={40}>
            <IndicatorSelect $width={117}>
              MACD
              <Caret />
            </IndicatorSelect>
            <Legend $height={38} $left={12} $gap={17} $lift={2} $tracking={1.38}>
              <LegendItem>(12,26,9)</LegendItem>
              <LegendItem $shift={-9}>MACD:333.03</LegendItem>
              <LegendItem>DIFF:-262.25</LegendItem>
              <LegendItem $color='#14107e'>DEA:-428.76</LegendItem>
            </Legend>
          </PanelHead>
          <MacdChart />
        </Panel>
      </Main>
    </Body>

    <IndexBar>
      {indices.map(({ text, unit, width, up, small, market }) => (
        <IndexCell key={text} $width={width} $up={up} $small={small} $market={market}>
          {text}
          {unit && <i>{unit}</i>}
        </IndexCell>
      ))}
    </IndexBar>

    <NavBar>
      {navItems.map(([icon, label]) => (
        <NavItem key={icon} $active={icon === 'market'}>
          <svg width='42' height='46' viewBox='0 0 42 46'>
            {navIcons[icon]}
          </svg>
          {label}
        </NavItem>
      ))}
      <Smudge />
    </NavBar>

    <StatusBar>
      <Clock>23:02</Clock>
      <Today>8月9日周日</Today>
      <StatusIcons />
      <Charge>28%</Charge>
      <Battery />
    </StatusBar>

    <Drawer width='50' height='212' viewBox='0 0 50 212'>
      <path d='M0 2Q2 10 12 10H20Q48 12 48 46V166Q48 198 18 201H10Q2 202 0 210Z' fill='#252525' />
      <path d='M18 84L29 107L18 129' fill='none' stroke='#b9b8be' strokeWidth='9' strokeLinecap='round' strokeLinejoin='round' />
    </Drawer>

    <Overlay width='2160' height='1620' viewBox='0 0 2160 1620'>
      <path d='M1822 1240Q1880 1252 1922 1306L1908 1312Q1870 1270 1822 1250Z' fill='#3e99e9' />
      {strokes.map(({ color, points }) => (
        <path
          key={points}
          d={smooth(points)}
          fill='none'
          stroke={color}
          strokeWidth='12.5'
          strokeLinecap='round'
          strokeLinejoin='round'
        />
      ))}
    </Overlay>
    <BlueNote>顶背离双头</BlueNote>
    <PurpleNote>水下金叉只是反弹，也到了重压力位了</PurpleNote>
  </Screen>
);

export default App;
